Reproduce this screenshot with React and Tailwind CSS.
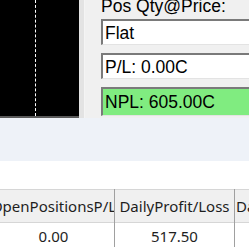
// Trading status panel with the P/L table below it

const boxBase =
  'h-[26px] w-[200px] flex items-center pl-[2px] border-t-2 border-l-2 border-t-[#7a7a7a] border-l-[#7a7a7a] border-b border-b-[#e3e3e3]';

const columns = [
  { title: 'OpenPositionsP/L', value: '0.00', width: 'w-[122px]', align: 'justify-center' },
  { title: 'DailyProfit/Loss', value: '517.50', width: 'w-[120px]', align: 'justify-center' },
  { title: 'DailyVolume', value: '', width: 'w-[120px]', align: 'justify-start pl-[1px]' },
];

const App = () => {
  return (
    <div className="w-[249px] h-[247px] overflow-hidden bg-white flex flex-col">
      {/* Chart + account fields */}
      <div className="h-[118px] flex shrink-0">
        <div className="w-[79px] h-full flex flex-col">
          <div className="flex-1 bg-black flex">
            <div className="w-[35px]" />
            <div className="w-px h-full border-l border-dashed border-white" />
          </div>
          <div className="h-[2px] bg-[#5a5a5a]" />
        </div>
        <div className="w-[6px] h-full bg-[#e3e3e3] border-r border-[#f4f4f4]" />
        <div
          className="flex-1 h-full bg-[#f0f0f0] pl-[16px] text-[17.5px] text-black leading-[20px] overflow-hidden"
          style={{ fontFamily: '"Liberation Sans", Arial, sans-serif' }}
        >
          <div className="mt-[-4px] whitespace-nowrap">Pos Qty@Price:</div>
          <div className="mt-[3px] flex flex-col gap-[8px]">
            <div className={`${boxBase} bg-white`}>Flat</div>
            <div className={`${boxBase} bg-white`}>P/L: 0.00C</div>
            <div className={`${boxBase} bg-[#80ec80] h-[29px]`}>NPL: 605.00C</div>
          </div>
        </div>
      </div>

      {/* Empty strip above the grid */}
      <div className="h-[43px] bg-[#eef2f8] shrink-0" />
      <div className="h-[28px] bg-white shrink-0" />

      {/* Grid */}
      <div
        className="ml-[-7px] flex text-[15px] text-[#1e1e1e]"
        style={{ fontFamily: '"Noto Sans", "Open Sans", sans-serif' }}
      >
        {columns.map((col) => (
          <div key={col.title} className={`${col.width} shrink-0 flex flex-col border-r border-[#a0a0a0]`}>
            <div className={`h-[34px] bg-[#f0f0f0] border-t border-b border-[#d6d6d6] flex items-center ${col.align} whitespace-nowrap overflow-hidden`}>
              {col.title}
            </div>
            <div className="h-[26px] flex items-center justify-center">{col.value}</div>
          </div>
        ))}
      </div>
    </div>
  );
};

export default App;
